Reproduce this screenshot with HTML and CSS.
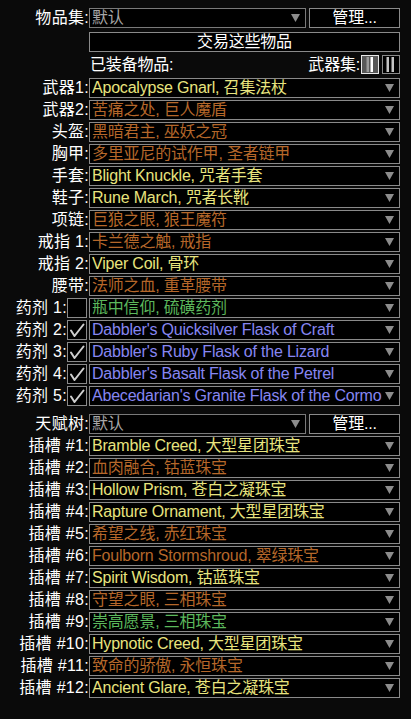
FILE: index.html
```html
<!DOCTYPE html>
<html lang="zh">
<head>
<meta charset="utf-8">
<title>物品集</title>
<link rel="stylesheet" href="styles.css">
</head>
<body>
<div class="panel">
  <div class="row">
    <span class="lbl">物品集:</span>
    <div class="sel short dimbox"><span class="txt dim">默认</span><svg class="arr" viewBox="0 0 9 8"><polygon points="0,0 9,0 4.5,8"/></svg></div>
    <div class="btn manage">管理...</div>
  </div>
  <div class="row trade">
    <span class="lbl"></span>
    <div class="btn wide">交易这些物品</div>
  </div>
  <div class="row hdr">
    <span class="lbl"></span>
    <span class="eq">已装备物品:</span>
    <span class="ws">武器集:</span>
    <svg class="wicon" viewBox="0 0 18 19"><rect x="0.5" y="0.5" width="17" height="18" fill="#575757" stroke="#e8e8e8"/><rect x="5.5" y="2" width="2.5" height="15" fill="#9a9a9a"/><rect x="9.5" y="2" width="2.5" height="15" fill="#ffffff"/></svg>
    <svg class="wicon second" viewBox="0 0 18 19"><rect x="0.5" y="0.5" width="17" height="18" fill="#000" stroke="#8a8a8a"/><rect x="4.5" y="2" width="2.5" height="15" fill="#c4c4c4"/><rect x="9.5" y="2" width="2.5" height="15" fill="#c4c4c4"/></svg>
  </div>

  <div class="list equip">
    <div class="row"><span class="lbl">武器1:</span><div class="sel"><span class="txt rare">Apocalypse Gnarl, 召集法杖</span><svg class="arr" viewBox="0 0 9 8"><polygon points="0,0 9,0 4.5,8"/></svg></div></div>
    <div class="row"><span class="lbl">武器2:</span><div class="sel"><span class="txt unique">苦痛之处, 巨人魔盾</span><svg class="arr" viewBox="0 0 9 8"><polygon points="0,0 9,0 4.5,8"/></svg></div></div>
    <div class="row"><span class="lbl">头盔:</span><div class="sel"><span class="txt unique">黑暗君主, 巫妖之冠</span><svg class="arr" viewBox="0 0 9 8"><polygon points="0,0 9,0 4.5,8"/></svg></div></div>
    <div class="row"><span class="lbl">胸甲:</span><div class="sel"><span class="txt unique">多里亚尼的试作甲, 圣者链甲</span><svg class="arr" viewBox="0 0 9 8"><polygon points="0,0 9,0 4.5,8"/></svg></div></div>
    <div class="row"><span class="lbl">手套:</span><div class="sel"><span class="txt rare">Blight Knuckle, 咒者手套</span><svg class="arr" viewBox="0 0 9 8"><polygon points="0,0 9,0 4.5,8"/></svg></div></div>
    <div class="row"><span class="lbl">鞋子:</span><div class="sel"><span class="txt rare">Rune March, 咒者长靴</span><svg class="arr" viewBox="0 0 9 8"><polygon points="0,0 9,0 4.5,8"/></svg></div></div>
    <div class="row"><span class="lbl">项链:</span><div class="sel"><span class="txt unique">巨狼之眼, 狼王魔符</span><svg class="arr" viewBox="0 0 9 8"><polygon points="0,0 9,0 4.5,8"/></svg></div></div>
    <div class="row"><span class="lbl">戒指 1:</span><div class="sel"><span class="txt unique">卡兰德之触, 戒指</span><svg class="arr" viewBox="0 0 9 8"><polygon points="0,0 9,0 4.5,8"/></svg></div></div>
    <div class="row"><span class="lbl">戒指 2:</span><div class="sel"><span class="txt rare">Viper Coil, 骨环</span><svg class="arr" viewBox="0 0 9 8"><polygon points="0,0 9,0 4.5,8"/></svg></div></div>
    <div class="row"><span class="lbl">腰带:</span><div class="sel"><span class="txt unique">法师之血, 重革腰带</span><svg class="arr" viewBox="0 0 9 8"><polygon points="0,0 9,0 4.5,8"/></svg></div></div>
    <div class="row"><span class="lbl flbl">药剂 1:</span><span class="chk"></span><div class="sel"><span class="txt relic">瓶中信仰, 硫磺药剂</span><svg class="arr" viewBox="0 0 9 8"><polygon points="0,0 9,0 4.5,8"/></svg></div></div>
    <div class="row"><span class="lbl flbl">药剂 2:</span><span class="chk"><svg viewBox="0 0 18 18"><polyline points="3,9.5 6.5,15 15.5,3.5"/></svg></span><div class="sel"><span class="txt magic">Dabbler's Quicksilver Flask of Craft</span><svg class="arr" viewBox="0 0 9 8"><polygon points="0,0 9,0 4.5,8"/></svg></div></div>
    <div class="row"><span class="lbl flbl">药剂 3:</span><span class="chk"><svg viewBox="0 0 18 18"><polyline points="3,9.5 6.5,15 15.5,3.5"/></svg></span><div class="sel"><span class="txt magic">Dabbler's Ruby Flask of the Lizard</span><svg class="arr" viewBox="0 0 9 8"><polygon points="0,0 9,0 4.5,8"/></svg></div></div>
    <div class="row"><span class="lbl flbl">药剂 4:</span><span class="chk"><svg viewBox="0 0 18 18"><polyline points="3,9.5 6.5,15 15.5,3.5"/></svg></span><div class="sel"><span class="txt magic">Dabbler's Basalt Flask of the Petrel</span><svg class="arr" viewBox="0 0 9 8"><polygon points="0,0 9,0 4.5,8"/></svg></div></div>
    <div class="row"><span class="lbl flbl">药剂 5:</span><span class="chk"><svg viewBox="0 0 18 18"><polyline points="3,9.5 6.5,15 15.5,3.5"/></svg></span><div class="sel"><span class="txt magic">Abecedarian's Granite Flask of the Cormorant</span><svg class="arr" viewBox="0 0 9 8"><polygon points="0,0 9,0 4.5,8"/></svg></div></div>
  </div>

  <div class="row tree">
    <span class="lbl">天赋树:</span>
    <div class="sel short dimbox"><span class="txt dim">默认</span><svg class="arr" viewBox="0 0 9 8"><polygon points="0,0 9,0 4.5,8"/></svg></div>
    <div class="btn manage">管理...</div>
  </div>

  <div class="list slots">
    <div class="row"><span class="lbl">插槽 #1:</span><div class="sel"><span class="txt rare">Bramble Creed, 大型星团珠宝</span><svg class="arr" viewBox="0 0 9 8"><polygon points="0,0 9,0 4.5,8"/></svg></div></div>
    <div class="row"><span class="lbl">插槽 #2:</span><div class="sel"><span class="txt unique">血肉融合, 钴蓝珠宝</span><svg class="arr" viewBox="0 0 9 8"><polygon points="0,0 9,0 4.5,8"/></svg></div></div>
    <div class="row"><span class="lbl">插槽 #3:</span><div class="sel"><span class="txt rare">Hollow Prism, 苍白之凝珠宝</span><svg class="arr" viewBox="0 0 9 8"><polygon points="0,0 9,0 4.5,8"/></svg></div></div>
    <div class="row"><span class="lbl">插槽 #4:</span><div class="sel"><span class="txt rare">Rapture Ornament, 大型星团珠宝</span><svg class="arr" viewBox="0 0 9 8"><polygon points="0,0 9,0 4.5,8"/></svg></div></div>
    <div class="row"><span class="lbl">插槽 #5:</span><div class="sel"><span class="txt unique">希望之线, 赤红珠宝</span><svg class="arr" viewBox="0 0 9 8"><polygon points="0,0 9,0 4.5,8"/></svg></div></div>
    <div class="row"><span class="lbl">插槽 #6:</span><div class="sel"><span class="txt unique">Foulborn Stormshroud, 翠绿珠宝</span><svg class="arr" viewBox="0 0 9 8"><polygon points="0,0 9,0 4.5,8"/></svg></div></div>
    <div class="row"><span class="lbl">插槽 #7:</span><div class="sel"><span class="txt rare">Spirit Wisdom, 钴蓝珠宝</span><svg class="arr" viewBox="0 0 9 8"><polygon points="0,0 9,0 4.5,8"/></svg></div></div>
    <div class="row"><span class="lbl">插槽 #8:</span><div class="sel"><span class="txt unique">守望之眼, 三相珠宝</span><svg class="arr" viewBox="0 0 9 8"><polygon points="0,0 9,0 4.5,8"/></svg></div></div>
    <div class="row"><span class="lbl">插槽 #9:</span><div class="sel"><span class="txt relic">崇高愿景, 三相珠宝</span><svg class="arr" viewBox="0 0 9 8"><polygon points="0,0 9,0 4.5,8"/></svg></div></div>
    <div class="row"><span class="lbl">插槽 #10:</span><div class="sel"><span class="txt rare">Hypnotic Creed, 大型星团珠宝</span><svg class="arr" viewBox="0 0 9 8"><polygon points="0,0 9,0 4.5,8"/></svg></div></div>
    <div class="row"><span class="lbl">插槽 #11:</span><div class="sel"><span class="txt unique">致命的骄傲, 永恒珠宝</span><svg class="arr" viewBox="0 0 9 8"><polygon points="0,0 9,0 4.5,8"/></svg></div></div>
    <div class="row"><span class="lbl">插槽 #12:</span><div class="sel"><span class="txt rare">Ancient Glare, 苍白之凝珠宝</span><svg class="arr" viewBox="0 0 9 8"><polygon points="0,0 9,0 4.5,8"/></svg></div></div>
  </div>
</div>
</body>
</html>
```

FILE: styles.css
```css
* { box-sizing: border-box; }

html, body {
  margin: 0;
  background: #0a0a0a;
}

body {
  font-family: "Liberation Sans", "Noto Sans CJK SC", sans-serif;
  font-size: 16px;
  letter-spacing: -0.2px;
  color: #ffffff;
}

.panel {
  display: flex;
  flex-direction: column;
  padding: 8px 11px 0 0;
}

.row {
  display: flex;
  align-items: center;
  height: 20px;
}

.lbl {
  flex: none;
  width: 89px;
  text-align: right;
  white-space: nowrap;
  line-height: 18px;
  letter-spacing: 0.3px;
}

.lbl.flbl { width: 67px; }

.chk {
  flex: none;
  width: 20px;
  height: 20px;
  margin-right: 2px;
  border: 1px solid #8a8a8a;
  background: #000;
  display: flex;
  align-items: center;
  justify-content: center;
}

.chk svg {
  width: 18px;
  height: 18px;
  fill: none;
  stroke: #cfcfcf;
  stroke-width: 2;
  stroke-linecap: round;
  stroke-linejoin: round;
}

.sel {
  flex: 1;
  min-width: 0;
  height: 20px;
  border: 1px solid #8a8a8a;
  background: #000;
  display: flex;
  align-items: center;
  padding: 0 5px 0 2px;
}

.sel.short {
  flex: none;
  width: 217px;
}

.sel.dimbox { border-color: #7a7a7a; }

.txt {
  flex: 1;
  min-width: 0;
  overflow: hidden;
  white-space: nowrap;
  line-height: 18px;
}

.arr {
  flex: none;
  width: 9px;
  height: 8px;
  margin-left: 3px;
  fill: #8c8c8c;
}

.btn {
  height: 20px;
  border: 1px solid #8a8a8a;
  background: #000;
  text-align: center;
  line-height: 18px;
  white-space: nowrap;
}

.btn.manage {
  flex: none;
  width: 91px;
  margin-left: 3px;
}

.btn.wide { flex: 1; }

.trade { margin-top: 4px; }

.hdr {
  margin-top: 3px;
  height: 19px;
}

.eq {
  flex: 1;
  padding-left: 1px;
  line-height: 18px;
}

.ws {
  flex: none;
  line-height: 18px;
  margin-right: 1px;
}

.wicon {
  flex: none;
  width: 18px;
  height: 19px;
}

.wicon.second { margin-left: 3px; }

.list {
  display: flex;
  flex-direction: column;
  gap: 2px;
}

.equip { margin-top: 4px; }

.tree { margin-top: 8px; }

.slots { margin-top: 2px; }

.dim { color: #a8a8a8; }
.rare { color: #e8e47e; }
.unique { color: #b5672a; }
.magic { color: #8686f2; }
.relic { color: #5cb85c; }
```
